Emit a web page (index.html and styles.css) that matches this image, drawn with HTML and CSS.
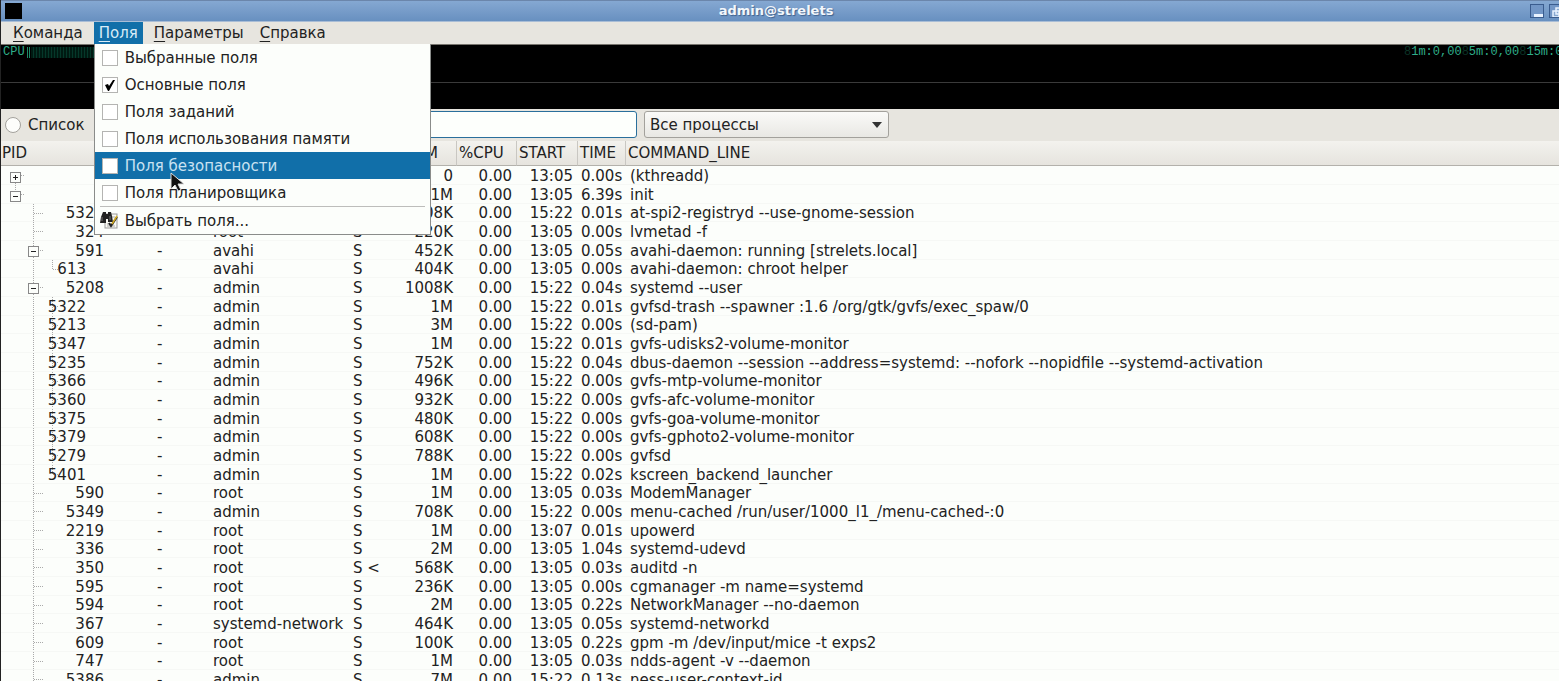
FILE: index.html
```html
<!DOCTYPE html>
<html lang="ru">
<head>
<meta charset="utf-8">
<title>admin@strelets</title>
<link rel="stylesheet" href="styles.css">
</head>
<body>
<div class="window">
  <header class="titlebar">
    <span class="app-icon"></span>
    <h1 class="title">admin@strelets</h1>
    <div class="controls">
      <button class="control" aria-label="Свернуть"><svg width="15" height="15" viewBox="0 0 15 15"><rect x="3" y="9" width="9" height="3" fill="#e8f2ff"/></svg></button>
      <button class="control" aria-label="Развернуть"><svg width="15" height="15" viewBox="0 0 15 15"><path d="M6 3h6v6H6zM3 6h6v6H3z" fill="#88a8d0" stroke="#e8f2ff" stroke-width="1.5"/></svg></button>
    </div>
  </header>
  <nav class="menubar">
    <button class="menu-title"><u>К</u>оманда</button>
    <div class="menu-holder">
      <button class="menu-title open"><u>П</u>оля</button>
      <div class="menu">
        <label class="item"><input type="checkbox">Выбранные поля</label>
        <label class="item"><input type="checkbox" checked>Основные поля</label>
        <label class="item"><input type="checkbox">Поля заданий</label>
        <label class="item"><input type="checkbox">Поля использования памяти</label>
        <label class="item current"><input type="checkbox">Поля безопасности</label>
        <label class="item"><input type="checkbox">Поля планировщика</label>
        <hr class="rule">
        <button class="item"><svg class="find-icon" width="19" height="19" viewBox="0 0 19 19"><rect x="5" y="3" width="12" height="14" fill="#fafaf4" stroke="#999"/><path d="M7 6h8M7 13h7M7 15h8" stroke="#aaa"/><path d="M3 1h3v2h2V1h3l1 4 1 6H8V8H6v4H0l1-6z" fill="#222"/><path d="M2 6v4M10 5v4" stroke="#777"/><path d="m9 12 2 3 6-9" fill="none" stroke="#222" stroke-width="2"/><path d="m12 13 5-8" stroke="#d5ad20" stroke-width="1.5"/></svg>Выбрать поля...</button>
      </div>
      <svg class="pointer" width="15" height="21" viewBox="0 0 15 21"><path d="M1 1v16l4-4 3 6 3-1-3-6h6z" fill="#111" stroke="#ddd"/></svg>
    </div>
    <button class="menu-title"><u>П</u>араметры</button>
    <button class="menu-title"><u>С</u>правка</button>
  </nav>
  <section class="monitor">
    <div class="meter"><span>CPU</span><i class="bars"></i></div>
    <div class="load"><s>8</s>1m:0,00<s>8</s>5m:0,00<s>8</s>15m:0,00</div>
  </section>
  <form class="toolbar">
    <label class="view"><input type="radio" name="view">Список</label>
    <input class="search" type="text" aria-label="Поиск">
    <div class="filter">
      <select aria-label="Фильтр"><option>Все процессы</option></select>
      <svg class="caret" width="10" height="6" viewBox="0 0 10 6"><path d="M0 0h10L5 6z" fill="#333"/></svg>
    </div>
  </form>
  <main class="list">
    <table>
      <colgroup><col class="c-pid"><col class="c-tty"><col class="c-user"><col class="c-stat"><col class="c-rss"><col class="c-cpu"><col class="c-start"><col class="c-time"><col></colgroup>
      <thead><tr><th>PID</th><th></th><th></th><th></th><th class="num">M</th><th>%CPU</th><th>START</th><th>TIME</th><th>COMMAND_LINE</th></tr></thead>
      <tbody>
<tr><td class="l1 down"><button class="toggle plus" aria-label="Развернуть ветвь"></button></td><td></td><td></td><td></td><td>0</td><td>0.00</td><td>13:05</td><td>0.00s</td><td>(kthreadd)</td></tr>
<tr><td class="l1 up"><button class="toggle" aria-label="Свернуть ветвь"></button></td><td></td><td></td><td></td><td>1M</td><td>0.00</td><td>13:05</td><td>6.39s</td><td>init</td></tr>
<tr><td class="l2">5323</td><td>-</td><td>admin</td><td>S</td><td>908K</td><td>0.00</td><td>15:22</td><td>0.01s</td><td>at-spi2-registryd --use-gnome-session</td></tr>
<tr><td class="l2">324</td><td>-</td><td>root</td><td>S</td><td>220K</td><td>0.00</td><td>13:05</td><td>0.00s</td><td>lvmetad -f</td></tr>
<tr><td class="l2"><button class="toggle" aria-label="Свернуть ветвь"></button>591</td><td>-</td><td>avahi</td><td>S</td><td>452K</td><td>0.00</td><td>13:05</td><td>0.05s</td><td>avahi-daemon: running [strelets.local]</td></tr>
<tr><td class="l3 last">613</td><td>-</td><td>avahi</td><td>S</td><td>404K</td><td>0.00</td><td>13:05</td><td>0.00s</td><td>avahi-daemon: chroot helper</td></tr>
<tr><td class="l2"><button class="toggle" aria-label="Свернуть ветвь"></button>5208</td><td>-</td><td>admin</td><td>S</td><td>1008K</td><td>0.00</td><td>15:22</td><td>0.04s</td><td>systemd --user</td></tr>
<tr><td class="l3">5322</td><td>-</td><td>admin</td><td>S</td><td>1M</td><td>0.00</td><td>15:22</td><td>0.01s</td><td>gvfsd-trash --spawner :1.6 /org/gtk/gvfs/exec_spaw/0</td></tr>
<tr><td class="l3">5213</td><td>-</td><td>admin</td><td>S</td><td>3M</td><td>0.00</td><td>15:22</td><td>0.00s</td><td>(sd-pam)</td></tr>
<tr><td class="l3">5347</td><td>-</td><td>admin</td><td>S</td><td>1M</td><td>0.00</td><td>15:22</td><td>0.01s</td><td>gvfs-udisks2-volume-monitor</td></tr>
<tr><td class="l3">5235</td><td>-</td><td>admin</td><td>S</td><td>752K</td><td>0.00</td><td>15:22</td><td>0.04s</td><td>dbus-daemon --session --address=systemd: --nofork --nopidfile --systemd-activation</td></tr>
<tr><td class="l3">5366</td><td>-</td><td>admin</td><td>S</td><td>496K</td><td>0.00</td><td>15:22</td><td>0.00s</td><td>gvfs-mtp-volume-monitor</td></tr>
<tr><td class="l3">5360</td><td>-</td><td>admin</td><td>S</td><td>932K</td><td>0.00</td><td>15:22</td><td>0.00s</td><td>gvfs-afc-volume-monitor</td></tr>
<tr><td class="l3">5375</td><td>-</td><td>admin</td><td>S</td><td>480K</td><td>0.00</td><td>15:22</td><td>0.00s</td><td>gvfs-goa-volume-monitor</td></tr>
<tr><td class="l3">5379</td><td>-</td><td>admin</td><td>S</td><td>608K</td><td>0.00</td><td>15:22</td><td>0.00s</td><td>gvfs-gphoto2-volume-monitor</td></tr>
<tr><td class="l3">5279</td><td>-</td><td>admin</td><td>S</td><td>788K</td><td>0.00</td><td>15:22</td><td>0.00s</td><td>gvfsd</td></tr>
<tr><td class="l3 last">5401</td><td>-</td><td>admin</td><td>S</td><td>1M</td><td>0.00</td><td>15:22</td><td>0.02s</td><td>kscreen_backend_launcher</td></tr>
<tr><td class="l2">590</td><td>-</td><td>root</td><td>S</td><td>1M</td><td>0.00</td><td>13:05</td><td>0.03s</td><td>ModemManager</td></tr>
<tr><td class="l2">5349</td><td>-</td><td>admin</td><td>S</td><td>708K</td><td>0.00</td><td>15:22</td><td>0.00s</td><td>menu-cached /run/user/1000_l1_/menu-cached-:0</td></tr>
<tr><td class="l2">2219</td><td>-</td><td>root</td><td>S</td><td>1M</td><td>0.00</td><td>13:07</td><td>0.01s</td><td>upowerd</td></tr>
<tr><td class="l2">336</td><td>-</td><td>root</td><td>S</td><td>2M</td><td>0.00</td><td>13:05</td><td>1.04s</td><td>systemd-udevd</td></tr>
<tr><td class="l2">350</td><td>-</td><td>root</td><td>S &lt;</td><td>568K</td><td>0.00</td><td>13:05</td><td>0.03s</td><td>auditd -n</td></tr>
<tr><td class="l2">595</td><td>-</td><td>root</td><td>S</td><td>236K</td><td>0.00</td><td>13:05</td><td>0.00s</td><td>cgmanager -m name=systemd</td></tr>
<tr><td class="l2">594</td><td>-</td><td>root</td><td>S</td><td>2M</td><td>0.00</td><td>13:05</td><td>0.22s</td><td>NetworkManager --no-daemon</td></tr>
<tr><td class="l2">367</td><td>-</td><td>systemd-network</td><td>S</td><td>464K</td><td>0.00</td><td>13:05</td><td>0.05s</td><td>systemd-networkd</td></tr>
<tr><td class="l2">609</td><td>-</td><td>root</td><td>S</td><td>100K</td><td>0.00</td><td>13:05</td><td>0.22s</td><td>gpm -m /dev/input/mice -t exps2</td></tr>
<tr><td class="l2">747</td><td>-</td><td>root</td><td>S</td><td>1M</td><td>0.00</td><td>13:05</td><td>0.03s</td><td>ndds-agent -v --daemon</td></tr>
<tr><td class="l2">5386</td><td>-</td><td>admin</td><td>S</td><td>7M</td><td>0.00</td><td>15:22</td><td>0.13s</td><td>ness-user-context-id</td></tr>
      </tbody>
    </table>
  </main>
</div>
</body>
</html>
```
FILE: styles.css
```css
* { box-sizing: border-box; }
body { margin: 0; background: #fcfefb; color: #222; font: 15px/18px "DejaVu Sans", sans-serif; }
button, input, select { font: inherit; color: inherit; margin: 0; }
button { border: 0; background: none; padding: 0; text-align: left; }

.window { height: 100vh; overflow: hidden; display: flex; flex-direction: column; border-left: 1px solid #222; }

.titlebar { flex: none; display: flex; align-items: center; height: 22px; padding-left: 4px; border-top: 1px solid #6b86ab; border-bottom: 1px solid #a9bdd6; background: linear-gradient(#85a8d2, #6890c0); }
.app-icon { width: 17px; height: 16px; background: #000; }
.title { flex: 1; margin: 0; text-align: center; font-size: 13px; line-height: 18px; color: #f2f7fc; text-shadow: 1px 1px 1px #3f618d; }
.controls { display: flex; gap: 5px; width: 29px; }
.control { flex: none; width: 14px; height: 14px; border: 1px solid #3a5c8e; background: #7296c6; display: grid; place-items: center; overflow: hidden; }

.menubar { flex: none; display: flex; gap: 6px; height: 23px; padding-left: 7px; background: #e7e5df; border-bottom: 1px solid #77746e; }
.menu-title { height: 22px; padding: 0 5px; line-height: 22px; }
.menu-title u { text-underline-offset: 3px; }
.menu-title.open { background: #116fa9; color: #d9ecf7; }
.menu-holder { position: relative; }
.menu { position: absolute; z-index: 2; top: 22px; left: 0; width: 337px; border: 1px solid #8a8c8a; border-top: 0; background: #fcfefb; }
.item { display: flex; align-items: center; gap: 7px; width: 100%; height: 27px; padding-left: 7px; white-space: nowrap; }
.item input { appearance: none; width: 16px; height: 16px; border: 1px solid #b4b4b2; background: #fff; }
.item input:checked { background: url("data:image/svg+xml,%3Csvg xmlns='http://www.w3.org/2000/svg' viewBox='0 0 14 14'%3E%3Cpath d='M2 7 5 6 6 8 10 2 12 2 6 13 5 13z' fill='%23000'/%3E%3C/svg%3E") #fff; }
.item.current { background: #116fa9; color: #c9e2f2; }
.rule { height: 1px; margin: 0 5px; border: 0; background: #bdbdbb; }
.find-icon { margin: 0 -1px 0 -2px; }
.pointer { position: absolute; z-index: 3; top: 150px; left: 76px; }

.monitor { flex: none; display: flex; justify-content: space-between; height: 64px; background: linear-gradient(#3a3a3a, #3a3a3a) 0 37px / 100% 1px no-repeat #000; color: #2fae8a; font: 12px/14px "Liberation Mono", monospace; }
.meter { display: flex; gap: 2px; padding-left: 2px; }
.bars { width: 70px; height: 11px; margin-top: 2px; background: linear-gradient(90deg, #1d8a68 1px, #000 1px 2px, #1d8a68 2px 3px, #000 3px 4px, transparent 4px), repeating-linear-gradient(90deg, #05382a 0 1px, #001a12 1px 3px); }
.load { width: 155px; overflow: hidden; white-space: nowrap; }
.load s { color: #0b3326; text-decoration: none; }

.toolbar { flex: none; display: flex; align-items: center; height: 32px; padding: 0 0 1px 4px; background: #e7e5df; }
.view { display: flex; align-items: center; gap: 7px; width: 92px; }
.view input { appearance: none; width: 16px; height: 16px; border: 1px solid #a3a19c; border-radius: 50%; background: #fdfdfb; }
.search { width: 540px; height: 27px; border: 1px solid #2a6f9c; border-radius: 3px; background: #fdfffc; }
.filter { position: relative; width: 245px; margin-left: 7px; }
.filter select { appearance: none; display: block; width: 100%; height: 27px; padding: 0 5px; border: 1px solid #a3a19c; border-radius: 3px; background: linear-gradient(#fafaf8, #e9e8e4); }
.caret { position: absolute; top: 11px; right: 7px; }

.list { flex: 1; min-height: 0; overflow: hidden; }
table { width: 100%; table-layout: fixed; border-collapse: separate; border-spacing: 0; }
.c-pid { width: 107px; }
.c-tty { width: 102px; }
.c-user { width: 140px; }
.c-stat { width: 36px; }
.c-rss { width: 71px; }
.c-cpu { width: 60px; }
.c-start { width: 61px; }
.c-time { width: 48px; }
th { height: 25px; padding: 0 2px; text-align: left; font-weight: 400; border-right: 1px solid #c9c7c2; border-bottom: 1px solid #b3b1ab; background: linear-gradient(#f3f2ee, #e6e4de); }
th:last-child { border-right: 0; }
th:nth-child(1) { padding-left: 1px; }
th.num { padding-right: 18px; text-align: right; }
tbody tr { height: 19px; }
tbody tr:nth-child(3n) { height: 18px; }
td { padding: 0 4px 0 3px; white-space: nowrap; box-shadow: inset 0 -1px #f6f8f5; text-align: right; }
td:nth-child(2), td:nth-child(3), td:nth-child(4), td:nth-child(9) { text-align: left; }
td:nth-child(2) { padding-left: 49px; }
td:nth-child(9) { padding-left: 4px; }
td:nth-child(6), td:nth-child(7), td:nth-child(8) { padding-right: 5px; }
.l1, .l2, .l3 { background-repeat: no-repeat; }
.l1 { background-image: repeating-linear-gradient(#aaa 0 1px, transparent 1px 2px), repeating-linear-gradient(90deg, #aaa 0 1px, transparent 1px 2px); background-size: 1px 10px, 10px 1px; }
.l1.down { background-position: 14px 9px, 14px 9px; }
.l1.up { background-position: 14px 0, 14px 9px; }
.l2 { background-image: repeating-linear-gradient(#aaa 0 1px, transparent 1px 2px), repeating-linear-gradient(90deg, #aaa 0 1px, transparent 1px 2px); background-size: 1px 100%, 9px 1px; background-position: 32px 0, 33px 9px; }
.l3 { padding-right: 22px; background-image: repeating-linear-gradient(#aaa 0 1px, transparent 1px 2px), repeating-linear-gradient(#aaa 0 1px, transparent 1px 2px), repeating-linear-gradient(90deg, #aaa 0 1px, transparent 1px 2px); background-size: 1px 100%, 1px 100%, 6px 1px; background-position: 32px 0, 51px 0, 52px 9px; }
.l3.last { background-size: 1px 100%, 1px 9px, 6px 1px; }
.toggle { float: left; width: 11px; height: 11px; margin: 4px 0 0 24px; border: 1px solid #888; background: linear-gradient(#222, #222) center / 5px 1px no-repeat #fcfefb; }
.l1 .toggle { margin: 3px 0 0 6px; }
.toggle.plus { background: linear-gradient(#222, #222) center / 5px 1px no-repeat, linear-gradient(#222, #222) center / 1px 5px no-repeat #fcfefb; }
```
